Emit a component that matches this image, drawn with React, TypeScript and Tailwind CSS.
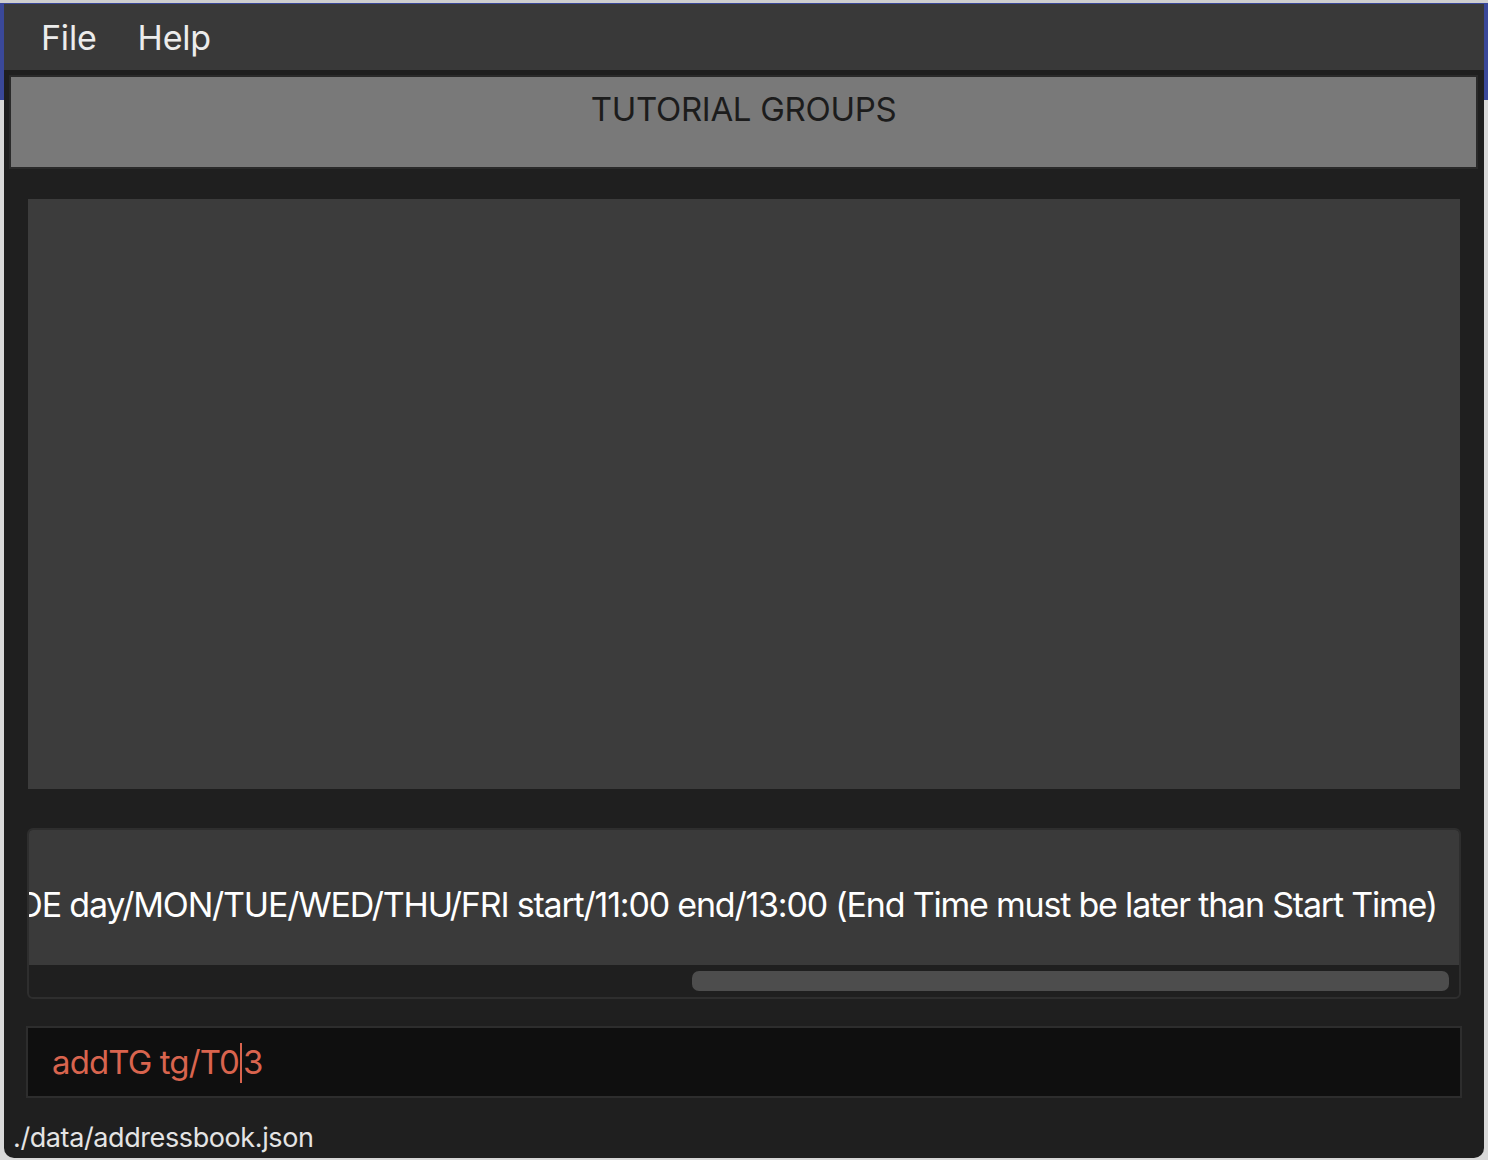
import React from 'react'

const font = { fontFamily: 'Inter, "Noto Sans", sans-serif' }

const result =
  'Invalid command format! addTG: Adds a tutorial group. Parameters: tg/TUTORIAL_GROUP_CODE day/MON/TUE/WED/THU/FRI start/11:00 end/13:00 (End Time must be later than Start Time)'

export default function App() {
  return (
    <div
      style={font}
      className="w-[1488px] h-[1160px] overflow-hidden bg-[linear-gradient(to_bottom,#cfcfcf_0px,#cfcfcf_3px,#3a4899_3px,#3a4899_100px,#d9d9d9_100px)] pt-[4px] pl-[4px]"
    >
      <div className="w-[1480px] h-[1154px] rounded-b-[10px] bg-[#1f1f1f] flex flex-col overflow-hidden">
        {/* menu bar */}
        <div className="h-[66px] shrink-0 bg-[#393939] flex items-center gap-[41px] pl-[37px] text-[34px] text-[#ececec] tracking-[-0.2px]">
          <span>File</span>
          <span>Help</span>
        </div>

        {/* title */}
        <div className="mt-[5px] ml-[5px] mr-[6px] h-[94px] shrink-0 border-2 border-[#2a2a2a] bg-[#797979] flex justify-center pt-[12px]">
          <span className="text-[33px] leading-[40px] text-[#1c1c1c] tracking-[-0.3px]">TUTORIAL GROUPS</span>
        </div>

        {/* list */}
        <div className="mt-[30px] mx-[24px] h-[590px] shrink-0 bg-[#3c3c3c]" />

        {/* result display */}
        <div className="mt-[39px] mx-[23px] h-[171px] shrink-0 rounded-[6px] border-2 border-[#2e2e2e] bg-[#1f1f1f] flex flex-col overflow-hidden">
          <div className="h-[135px] shrink-0 bg-[#3a3a3a] flex items-center justify-end overflow-hidden pr-[22px] pt-[14px]">
            <span className="whitespace-nowrap shrink-0 text-[34px] text-white tracking-[-1.2px]">{result}</span>
          </div>
          <div className="flex-1 flex items-center pl-[663px] pr-[10px]">
            <div className="h-[20px] w-full rounded-[7px] bg-[#4d4d4d]" />
          </div>
        </div>

        {/* command box */}
        <div className="mt-[27px] ml-[22px] mr-[22px] h-[72px] shrink-0 border-2 border-[#2d2d2d] bg-[#0f0f0f] flex items-center pl-[24px] pt-[2px]">
          <span className="text-[33px] text-[#d9644e] tracking-[-0.9px] whitespace-nowrap">addTG tg/T0</span>
          <span className="w-[2px] h-[40px] bg-[#d9644e] mx-[1px]" />
          <span className="text-[33px] text-[#d9644e] tracking-[-0.9px]">3</span>
        </div>

        {/* status bar */}
        <div className="mt-[20px] pl-[9px] text-[27px] text-[#e4e4e4] tracking-[-0.4px]">./data/addressbook.json</div>
      </div>
    </div>
  )
}
